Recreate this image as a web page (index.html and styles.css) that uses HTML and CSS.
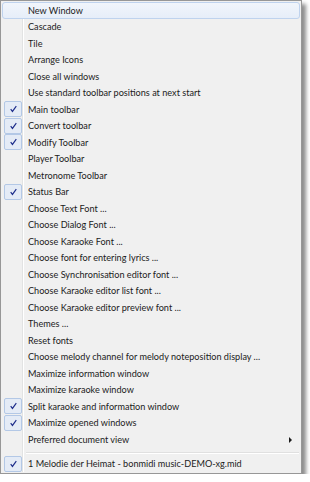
FILE: index.html
```html
<!DOCTYPE html>
<html lang="en">
<head>
  <meta charset="UTF-8">
  <title>Window Menu</title>
  <link rel="stylesheet" href="styles.css">
</head>
<body>
  <div class="menu">
    <div class="menu-item active"><span class="check"></span><span class="label">New Window</span></div>
    <div class="menu-item"><span class="check"></span><span class="label">Cascade</span></div>
    <div class="menu-item"><span class="check"></span><span class="label">Tile</span></div>
    <div class="menu-item"><span class="check"></span><span class="label">Arrange Icons</span></div>
    <div class="menu-item"><span class="check"></span><span class="label">Close all windows</span></div>
    <div class="menu-item"><span class="check"></span><span class="label">Use standard toolbar positions at next start</span></div>
    <div class="menu-item checked"><span class="check"><svg viewBox="0 0 8 8"><path d="M0.8 4.2 L2.8 6.8 L7.2 0.8"/></svg></span><span class="label">Main toolbar</span></div>
    <div class="menu-item checked"><span class="check"><svg viewBox="0 0 8 8"><path d="M0.8 4.2 L2.8 6.8 L7.2 0.8"/></svg></span><span class="label">Convert toolbar</span></div>
    <div class="menu-item checked"><span class="check"><svg viewBox="0 0 8 8"><path d="M0.8 4.2 L2.8 6.8 L7.2 0.8"/></svg></span><span class="label">Modify Toolbar</span></div>
    <div class="menu-item"><span class="check"></span><span class="label">Player Toolbar</span></div>
    <div class="menu-item"><span class="check"></span><span class="label">Metronome Toolbar</span></div>
    <div class="menu-item checked"><span class="check"><svg viewBox="0 0 8 8"><path d="M0.8 4.2 L2.8 6.8 L7.2 0.8"/></svg></span><span class="label">Status Bar</span></div>
    <div class="menu-item"><span class="check"></span><span class="label">Choose Text Font ...</span></div>
    <div class="menu-item"><span class="check"></span><span class="label">Choose Dialog Font ...</span></div>
    <div class="menu-item"><span class="check"></span><span class="label">Choose Karaoke Font ...</span></div>
    <div class="menu-item"><span class="check"></span><span class="label">Choose font for entering lyrics ...</span></div>
    <div class="menu-item"><span class="check"></span><span class="label">Choose Synchronisation editor font ...</span></div>
    <div class="menu-item"><span class="check"></span><span class="label">Choose Karaoke editor list font ...</span></div>
    <div class="menu-item"><span class="check"></span><span class="label">Choose Karaoke editor preview font ...</span></div>
    <div class="menu-item"><span class="check"></span><span class="label">Themes ...</span></div>
    <div class="menu-item"><span class="check"></span><span class="label">Reset fonts</span></div>
    <div class="menu-item"><span class="check"></span><span class="label">Choose melody channel for melody noteposition display ...</span></div>
    <div class="menu-item"><span class="check"></span><span class="label">Maximize information window</span></div>
    <div class="menu-item"><span class="check"></span><span class="label">Maximize karaoke window</span></div>
    <div class="menu-item checked"><span class="check"><svg viewBox="0 0 8 8"><path d="M0.8 4.2 L2.8 6.8 L7.2 0.8"/></svg></span><span class="label">Split karaoke and information window</span></div>
    <div class="menu-item checked"><span class="check"><svg viewBox="0 0 8 8"><path d="M0.8 4.2 L2.8 6.8 L7.2 0.8"/></svg></span><span class="label">Maximize opened windows</span></div>
    <div class="menu-item submenu"><span class="check"></span><span class="label">Preferred document view</span><span class="arrow"></span></div>
    <div class="menu-separator"></div>
    <div class="menu-item checked"><span class="check"><svg viewBox="0 0 8 8"><path d="M0.8 4.2 L2.8 6.8 L7.2 0.8"/></svg></span><span class="label">1 Melodie der Heimat - bonmidi music-DEMO-xg.mid</span></div>
  </div>
</body>
</html>
```

FILE: styles.css
```css
* {
  margin: 0;
  padding: 0;
  box-sizing: border-box;
}

body {
  background-color: #ffffff;
  font-family: Lato, 'Liberation Sans', sans-serif;
  font-size: 9.15px;
  color: #1b1b1b;
  overflow: hidden;
}

.menu {
  position: relative;
  width: 302px;
  height: 474px;
  background-color: #f0f0f0;
  border: 1px solid #979797;
  padding: 1px 1px;
  box-shadow: 4px 4px 4px rgba(0, 0, 0, 0.45);
}

/* the icon gutter line */
.menu::before {
  content: "";
  position: absolute;
  top: 1px;
  bottom: 1px;
  left: 21px;
  width: 1px;
  background-color: #e2e3e3;
  border-right: 1px solid #ffffff;
  box-sizing: content-box;
}

.menu-item {
  display: flex;
  align-items: center;
  height: 16.5px;
  position: relative;
  border: 1px solid transparent;
  border-radius: 3px;
}

.menu-item.active {
  background: linear-gradient(to bottom, #f1f5fb 0%, #e6eef9 100%);
  border-color: #bfd3ee;
}

.check {
  width: 18px;
  height: 16px;
  margin-left: 1px;
  display: flex;
  align-items: center;
  justify-content: center;
  flex-shrink: 0;
}

.check svg {
  width: 7px;
  height: 8px;
  fill: none;
  stroke: #1c2b8a;
  stroke-width: 1.3;
}

.checked .check {
  background-color: #e4ebf6;
  border: 1px solid #b3c8e6;
  border-radius: 2px;
}

.label {
  margin-left: 6px;
  white-space: nowrap;
}

.arrow {
  position: absolute;
  right: 7px;
  top: 5px;
  width: 0;
  height: 0;
  border-top: 3px solid transparent;
  border-bottom: 3px solid transparent;
  border-left: 3px solid #1b1b1b;
}

.menu-separator {
  height: 8px;
  margin-left: 22px;
  margin-right: 1px;
  position: relative;
}

.menu-separator::after {
  content: "";
  position: absolute;
  left: 2px;
  right: 0;
  top: 4px;
  height: 1px;
  background-color: #e0e0e0;
  border-bottom: 1px solid #ffffff;
  box-sizing: content-box;
}
```
